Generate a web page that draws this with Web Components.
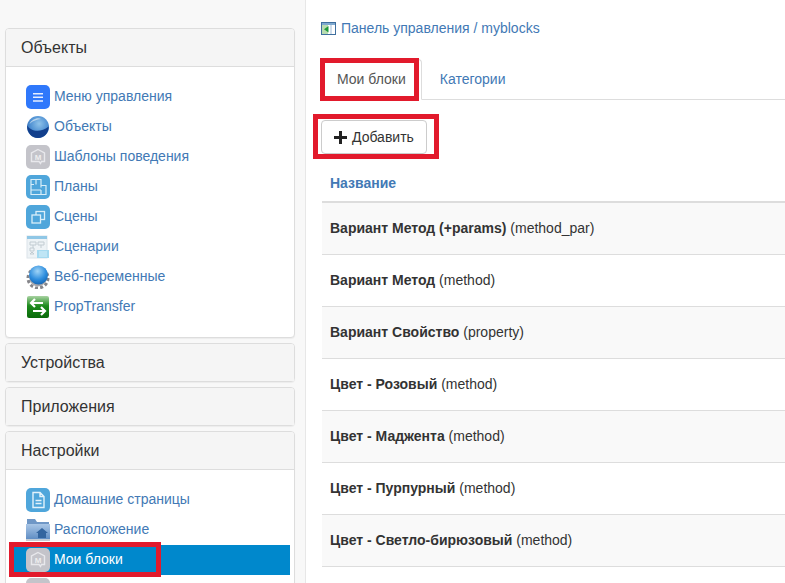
<!DOCTYPE html>
<html lang="ru">
<head>
<meta charset="utf-8">
<title>Мои блоки</title>
<style>
  html, body { margin: 0; padding: 0; height: 583px; overflow: hidden; background: #fff; }
  body { font: 14px/20px "Liberation Sans", Arial, sans-serif; color: #333; }
</style>
</head>
<body>
<app-page>
  <side-bar slot="side">
    <side-panel title="Объекты" open>
      <menu-item icon="menu">Меню управления</menu-item>
      <menu-item icon="globe">Объекты</menu-item>
      <menu-item icon="block">Шаблоны поведения</menu-item>
      <menu-item icon="plan">Планы</menu-item>
      <menu-item icon="scene">Сцены</menu-item>
      <menu-item icon="script">Сценарии</menu-item>
      <menu-item icon="webvar">Веб-переменные</menu-item>
      <menu-item icon="transfer">PropTransfer</menu-item>
    </side-panel>
    <side-panel title="Устройства"></side-panel>
    <side-panel title="Приложения"></side-panel>
    <side-panel title="Настройки" open>
      <menu-item icon="doc">Домашние страницы</menu-item>
      <menu-item icon="location">Расположение</menu-item>
      <menu-item icon="block" active>Мои блоки</menu-item>
      <menu-item icon="blank"></menu-item>
    </side-panel>
  </side-bar>

  <bread-crumb>Панель управления / myblocks</bread-crumb>
  <tab-bar>
    <tab-item active>Мои блоки</tab-item>
    <tab-item>Категории</tab-item>
  </tab-bar>
  <add-button>Добавить</add-button>
  <block-table>
    <block-row><b>Вариант Метод (+params)</b> (method_par)</block-row>
    <block-row><b>Вариант Метод</b> (method)</block-row>
    <block-row><b>Вариант Свойство</b> (property)</block-row>
    <block-row><b>Цвет - Розовый</b> (method)</block-row>
    <block-row><b>Цвет - Маджента</b> (method)</block-row>
    <block-row><b>Цвет - Пурпурный</b> (method)</block-row>
    <block-row><b>Цвет - Светло-бирюзовый</b> (method)</block-row>
    <block-row></block-row>
  </block-table>

  <red-mark slot="marks" style="left:320px;top:58px;width:99px;height:43px"></red-mark>
  <red-mark slot="marks" style="left:313px;top:114px;width:126px;height:45px"></red-mark>
  <red-mark slot="marks" style="left:9px;top:542px;width:152px;height:35px"></red-mark>
</app-page>

<script>
  const LINK = "#4279b5";

  const ICONS = {
    menu: `<rect width="24" height="24" rx="5" fill="#2f78fb"/>
      <path d="M7 8.800h10M7 12.300h10M7 16h10" stroke="#e6eeff" stroke-width="1.600"/>`,
    globe: `<defs><radialGradient id="g" cx=".55" cy=".35" r=".75">
        <stop offset="0" stop-color="#8fc3ea"/><stop offset=".55" stop-color="#4d8fd2"/><stop offset="1" stop-color="#1b4f9c"/>
      </radialGradient></defs>
      <circle cx="12" cy="12" r="11" fill="url(#g)"/>
      <path d="M1.200 10.500c3 5.500 13 8 21.500 1C22.800 18 18 23 12 23S.8 17.500 1.200 10.500z" fill="#123f8c"/>
      <path d="M3.500 9c2-4.500 8-7 11.500-5-4 .5-8 1.500-11.500 5z" fill="#d5e6f3" opacity=".75"/>`,
    block: `<rect width="24" height="24" rx="5" fill="#c4c4ca"/>
      <path d="M12 4.500l6.500 3.500v8.500h-3l-1 2-1.500-2H5.500V8z" fill="none" stroke="#e8e8ec" stroke-width="1.400"/>
      <text x="12" y="15" text-anchor="middle" font-family="Liberation Sans" font-weight="700" font-size="8" fill="#eee">M</text>`,
    blank: `<rect width="24" height="24" rx="5" fill="#c4c4ca"/>`,
    plan: `<rect width="24" height="24" rx="5" fill="#4fa6db"/>
      <path d="M5 4.500h10v6h5v9H5zM5 15h10M10 4.500v5M5 9.500h3M15 10.500v2M15 15v4.500" fill="none" stroke="#d9eef9" stroke-width="1.200"/>`,
    scene: `<rect width="24" height="24" rx="5" fill="#4fa6db"/>
      <rect x="10" y="6.500" width="8.500" height="8" fill="none" stroke="#d9eef9" stroke-width="1.300"/>
      <rect x="6" y="10" width="8.500" height="8" fill="#4fa6db" stroke="#d9eef9" stroke-width="1.300"/>`,
    script: `<rect x="1" y="1" width="20" height="22" fill="#eef3f6" stroke="#dce4e9"/>
      <rect x="1" y="1" width="20" height="3" fill="#8fc7e6"/>
      <path d="M4 7h6v3H4zM12 7h6v3h-6zM4 13h4v3H4zM4 19l2-2 2 2z" fill="none" stroke="#c2ccd2"/>
      <path d="M7 10v3M15 10v3" stroke="#c2ccd2"/>
      <rect x="11" y="15" width="12" height="8" fill="#a6daf0"/>
      <path d="M13 17h8M13 19h8M13 21h8" stroke="#d8f0fa"/>`,
    webvar: `<defs><radialGradient id="w" cx=".45" cy=".3" r=".8">
        <stop offset="0" stop-color="#9fd4f7"/><stop offset=".55" stop-color="#2f8ede"/><stop offset="1" stop-color="#0f5ba8"/>
      </radialGradient></defs>
      <circle cx="12" cy="13" r="8.500" fill="#a5a5aa"/>
      <circle cx="12" cy="13" r="10" fill="none" stroke="#85858a" stroke-width="3" stroke-dasharray="3 2.200"/>
      <circle cx="12.500" cy="10" r="9.500" fill="url(#w)"/>`,
    transfer: `<defs><linearGradient id="t" x2="0" y2="1">
        <stop offset="0" stop-color="#a9d3a2"/><stop offset=".45" stop-color="#1c8a1c"/><stop offset="1" stop-color="#0a6a0a"/>
      </linearGradient></defs>
      <rect x="1" y="1" width="22" height="22" rx="2" fill="url(#t)"/>
      <path d="M17 8H5M9 4L5 8l4 4M7 16h12M15 12l4 4-4 4" fill="none" stroke="#fff" stroke-width="2.200"/>`,
    doc: `<rect width="24" height="24" rx="5" fill="#4fa6db"/>
      <path d="M7 4.500h7l4 4v11H7zM14 4.500v4h4M9.500 12.500h6M9.500 15.500h6" fill="none" stroke="#e2f2fb" stroke-width="1.400"/>`,
    location: `<defs><linearGradient id="l" x2="0" y2="1">
        <stop offset="0" stop-color="#a9c6e6"/><stop offset="1" stop-color="#5b8ac2"/>
      </linearGradient></defs>
      <path d="M1 1h8l2 3h12v3H1z" fill="#6f97c6"/>
      <rect x="0" y="6" width="24" height="16" fill="url(#l)"/>
      <rect x="0" y="21" width="24" height="2" fill="#c4cdd6"/>
      <path d="M10 15l6-5 6 5h-2v5h-8v-5z" fill="#33659f"/>`
  };

  function define(name, html, setup) {
    customElements.define(name, class extends HTMLElement {
      connectedCallback() {
        if (this.shadowRoot) return;
        this.attachShadow({ mode: "open" }).innerHTML = html;
        if (setup) setup(this);
      }
    });
  }

  define("app-page", `
    <style>
      :host { display: flex; position: relative; width: 785px; height: 583px; overflow: hidden; }
      main { flex: 1; min-width: 0; padding-left: 16px; }
    </style>
    <slot name="side"></slot>
    <main><slot></slot></main>
    <slot name="marks"></slot>`);

  define("side-bar", `
    <style>
      :host { display: flex; flex-direction: column; gap: 5px; box-sizing: border-box; flex: none;
        width: 306px; height: 583px; padding: 28px 10px 0 5px; background: #f8f8f8; border-right: 1px solid #e7e7e7; }
    </style>
    <slot></slot>`);

  define("side-panel", `
    <style>
      :host { display: block; flex: none; background: #fff; border: 1px solid #ddd; border-radius: 4px;
        box-shadow: 0 1px 1px rgba(0,0,0,.05); }
      h3 { margin: 0; padding: 9px 15px 8px; font-size: 16px; line-height: 20px; font-weight: 400; color: #333;
        background: #f5f5f5; border-radius: 3px 3px 0 0; }
      div { display: none; padding: 15px 4px; border-top: 1px solid #ddd; }
      :host([open]) div { display: block; }
    </style>
    <h3></h3>
    <div><slot></slot></div>`,
    (el) => { el.shadowRoot.querySelector("h3").textContent = el.getAttribute("title"); });

  define("menu-item", `
    <style>
      :host { display: flex; align-items: center; gap: 4px; height: 30px; padding-left: 16px; color: ${LINK}; }
      :host([active]) { background: #0088cc; color: #fff; }
      svg { display: block; flex: none; width: 24px; height: 24px; }
      span { margin-bottom: 2px; }
    </style>
    <svg viewBox="0 0 24 24"></svg>
    <span><slot></slot></span>`,
    (el) => { el.shadowRoot.querySelector("svg").innerHTML = ICONS[el.getAttribute("icon")]; });

  define("bread-crumb", `
    <style>
      :host { display: flex; align-items: center; gap: 5px; height: 20px; padding-top: 18px; margin-left: -1px; color: ${LINK}; }
      svg { display: block; flex: none; }
    </style>
    <svg width="15" height="13" viewBox="0 0 15 13">
      <rect x=".5" y=".5" width="14" height="12" fill="#fff" stroke="#3f6f9e"/>
      <rect x="1" y="1" width="13" height="2" fill="#7fa9cf"/>
      <rect x="1" y="3" width="6" height="9" fill="#b9dcb0"/>
      <path d="M7.500 4v6.500L3 7.200z" fill="#1f9a3a"/>
      <path d="M10 3v9" stroke="#9dbbd6"/>
    </svg>
    <slot></slot>`);

  define("tab-bar", `
    <style>
      :host { display: flex; gap: 2px; height: 40px; margin-top: 21px; border-bottom: 1px solid #ddd; }
    </style>
    <slot></slot>`);

  define("tab-item", `
    <style>
      :host { display: block; box-sizing: border-box; height: 41px; padding: 9px 15px 10px; color: ${LINK};
        border: 1px solid transparent; border-radius: 4px 4px 0 0; }
      :host([active]) { padding-left: 14px; color: #555; background: #fff; border-color: #ddd #ddd #fff; }
    </style>
    <slot></slot>`);

  define("add-button", `
    <style>
      :host { display: inline-flex; align-items: center; gap: 5px; box-sizing: border-box; height: 34px;
        margin: 20px 0 0 -1px; padding: 0 12px; color: #333; background: #fff; border: 1px solid #ccc; border-radius: 4px; }
      svg { display: block; flex: none; }
    </style>
    <svg width="13" height="13" viewBox="0 0 13 13"><path d="M5 0h3v5h5v3H8v5H5V8H0V5h5z" fill="#222"/></svg>
    <slot></slot>`);

  define("block-table", `
    <style>
      :host { display: block; margin-top: 11px; }
      header { padding: 8px; font-weight: 700; line-height: 20px; color: ${LINK}; border-bottom: 2px solid #ddd; }
    </style>
    <header>Название</header>
    <slot></slot>`);

  define("block-row", `
    <style>
      :host { display: block; box-sizing: border-box; height: 52px; padding: 15px 8px; border-bottom: 1px solid #ddd; }
      :host(:nth-child(odd)) { background: #f9f9f9; }
    </style>
    <slot></slot>`);

  define("red-mark", `
    <style>
      :host { display: block; position: absolute; box-sizing: border-box; border: 5px solid #e21a2c; }
    </style>`);
</script>
</body>
</html>
